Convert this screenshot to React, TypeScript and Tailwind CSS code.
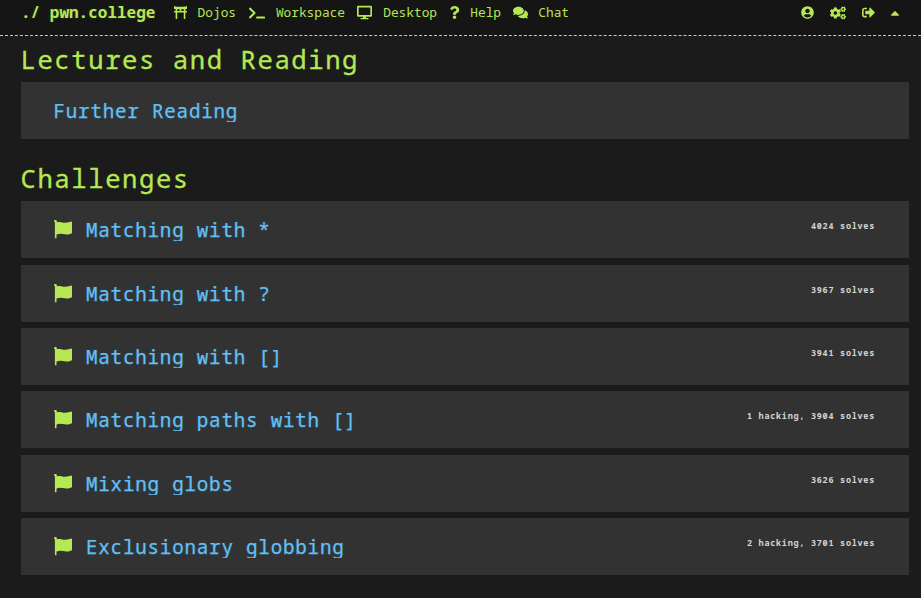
import type { ReactNode } from "react";
import {
  FaCaretUp,
  FaCogs,
  FaComments,
  FaDesktop,
  FaQuestion,
  FaSignOutAlt,
  FaTerminal,
  FaToriiGate,
  FaUserCircle,
} from "react-icons/fa";

const challenges = [
  { name: "Matching with *", stats: "4024 solves" },
  { name: "Matching with ?", stats: "3967 solves" },
  { name: "Matching with []", stats: "3941 solves" },
  { name: "Matching paths with []", stats: "1 hacking, 3904 solves" },
  { name: "Mixing globs", stats: "3626 solves" },
  { name: "Exclusionary globbing", stats: "2 hacking, 3701 solves" },
];

function NavItem({ icon, label, className }: { icon: ReactNode; label: string; className: string }) {
  return (
    <a className={`flex items-center justify-between ${className}`}>
      {icon}
      <span>{label}</span>
    </a>
  );
}

function Flag() {
  return (
    <svg viewBox="0 0 19 19" className="h-[19px] w-[19px] shrink-0 fill-[#b5e853]">
      <path d="M0 1.2C0 .5.6 0 1.4 0S2.900.5 2.900 1.200C2.900 1.700 2.700 2 2.400 2.300C5.500 1.300 8.500 2.700 11 2.700C14 2.700 16 1.900 18 1.500V13.200C15.500 14.300 13.500 14.800 11 14.300C8 13.700 5.500 13.400 2.500 14.500V18.300H.9V2.300C.4 2.100 0 1.700 0 1.200Z" />
    </svg>
  );
}

function Heading({ children }: { children: ReactNode }) {
  return (
    <h2 className="-ml-[0.5px] h-[44px] whitespace-pre text-[25.6px] leading-[44px] tracking-[1.57px] text-[#b5e853] [-webkit-text-stroke:0.3px_#b5e853]">
      {children}
    </h2>
  );
}

function Title({ children }: { children: ReactNode }) {
  return (
    <span className="h-[23px] overflow-hidden whitespace-pre text-[19.2px] leading-[23px] tracking-[0.8px] text-[#63c0f5] [-webkit-text-stroke:0.25px_#63c0f5] [text-shadow:0_0_5px_rgba(99,192,245,0.12)]">
      {children}
    </span>
  );
}

export default function App() {
  return (
    <div className="h-[598px] overflow-hidden bg-[#1b1b1b] font-['Noto_Sans_Mono','DejaVu_Sans_Mono',monospace]">
      <nav className="flex h-[36px] items-start border-b border-dashed border-[#b5e853] bg-[#151515] pl-[21px] pr-[19px] text-[12.8px] text-[#b5e853]">
        <div className="flex h-[25px] items-center">
          <a className="mb-[2px] w-[134px] whitespace-pre text-[16px] font-bold [text-shadow:0_0_5px_rgba(181,232,83,0.12)]">./ pwn.college</a>
          <NavItem className="ml-[19px] w-[62px]" icon={<FaToriiGate size={13} />} label="Dojos" />
          <NavItem className="ml-[13px] w-[96px]" icon={<FaTerminal size={16} />} label="Workspace" />
          <NavItem className="ml-[12px] w-[80px]" icon={<FaDesktop size={15} />} label="Desktop" />
          <NavItem className="ml-[11px] w-[53px]" icon={<FaQuestion size={13} />} label="Help" />
          <NavItem className="ml-[12px] w-[56px]" icon={<FaComments size={15} />} label="Chat" />
        </div>
        <div className="ml-auto flex h-[25px] items-center">
          <FaUserCircle size={13} />
          <FaCogs size={16} className="ml-[16px]" />
          <FaSignOutAlt size={13} className="ml-[16px]" />
          <FaCaretUp size={14} className="ml-[13px]" />
        </div>
      </nav>
      <main className="pl-[21px] pr-[12px] pt-[2px]">
        <Heading>Lectures and Reading</Heading>
        <div className="flex h-[57px] items-center bg-[#323232] pl-[32.5px]">
          <Title>Further Reading</Title>
        </div>
        <div className="h-[18px]" />
        <Heading>Challenges</Heading>
        <div className="flex flex-col gap-[6.4px] pt-[0.2px]">
          {challenges.map((c) => (
            <div key={c.name} className="flex h-[57px] items-center bg-[#323232] pl-[33px] pr-[34px]">
              <Flag />
              <span className="ml-[13px] flex">
                <Title>{c.name}</Title>
              </span>
              <span className="mb-[6px] ml-auto whitespace-pre text-[8.5px] font-bold tracking-[0.72px] text-[#d4d4d4]">
                {c.stats}
              </span>
            </div>
          ))}
        </div>
      </main>
    </div>
  );
}
